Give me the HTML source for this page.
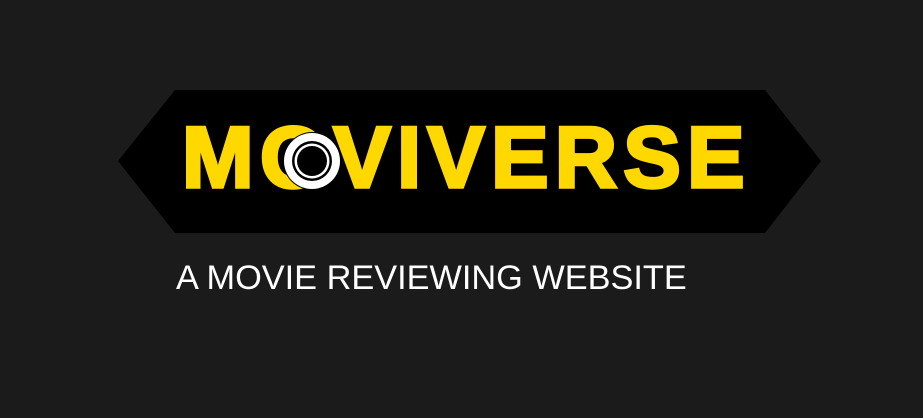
<!DOCTYPE html>
<html><head><style>
html,body{margin:0;padding:0;background:#1b1b1b;width:923px;height:418px;overflow:hidden;position:relative;font-family:"Liberation Sans",Arial,sans-serif}
.t{position:absolute;left:182px;top:108px;font-weight:900;font-size:86px;line-height:100px;color:#ffd800;-webkit-text-stroke:3.5px #ffd800;letter-spacing:6.4px;white-space:nowrap}
.s{position:absolute;left:176px;top:258px;font-size:34.3px;line-height:40px;color:#fff;white-space:nowrap}
</style></head><body>
<svg width="923" height="418" style="position:absolute;left:0;top:0">
<polygon points="118,161 175,90 765,90 821,161 765,233 175,233" fill="#000"/>
</svg>
<div class="t">MOVIVERSE</div>
<svg width="923" height="418" style="position:absolute;left:0;top:0">
<circle cx="312" cy="161" r="29" fill="#000"/>
<circle cx="312" cy="161" r="28" fill="#fff"/>
<circle cx="312" cy="161" r="20" fill="#000"/>
<circle cx="312" cy="161" r="17.5" fill="#fff"/>
<circle cx="312" cy="161" r="15" fill="#000"/>
</svg>
<div class="s">A MOVIE REVIEWING WEBSITE</div>
</body></html>
